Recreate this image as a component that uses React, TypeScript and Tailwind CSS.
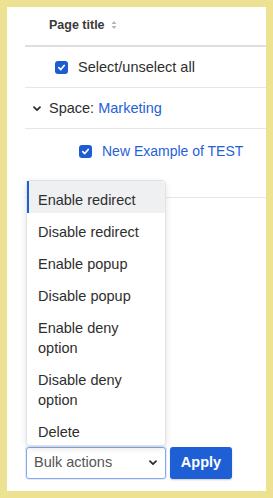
import React from "react";

const menuItems = [
  "Enable redirect",
  "Disable redirect",
  "Enable popup",
  "Disable popup",
  "Enable deny option",
  "Disable deny option",
  "Delete",
];

function Checkbox() {
  return (
    <span className="flex h-[13px] w-[13px] shrink-0 items-center justify-center rounded-[3px] bg-[#1d5cd3]">
      <svg width="9" height="9" viewBox="0 0 10 10" fill="none">
        <path d="M2 5.2 L4.2 7.3 L8 2.8" stroke="white" strokeWidth="1.9" strokeLinecap="round" strokeLinejoin="round" />
      </svg>
    </span>
  );
}

function SortIcon() {
  return (
    <svg width="6" height="10" viewBox="0 0 6 10" className="ml-[6px]">
      <path d="M3 1 L5.5 4 H0.5 Z" fill="#b5b5b5" />
      <path d="M3 9 L5.5 6 H0.5 Z" fill="#b5b5b5" />
    </svg>
  );
}

function Chevron({ className }: { className?: string }) {
  return (
    <svg width="8" height="6" viewBox="0 0 8 6" fill="none" className={className}>
      <path d="M1 1.2 L4 4.2 L7 1.2" stroke="#2b2b2b" strokeWidth="1.7" strokeLinecap="round" strokeLinejoin="round" />
    </svg>
  );
}

export default function App() {
  return (
    <div className="h-[498px] w-[273px] bg-[#ece292] p-[7px] font-['Liberation_Sans',Arial,sans-serif] text-[14.5px] text-[#2e2e2e]">
      <div className="flex h-full w-full flex-col bg-white">
        {/* tabla */}
        <div className="ml-[18px]">
          <div className="flex h-[40px] items-center border-b-2 border-[#dedede] pb-[2px] pl-[24px]">
            <span className="text-[12.5px] font-bold text-[#3a3a3a]">Page title</span>
            <SortIcon />
          </div>
          <div className="flex h-[41px] items-center gap-[10px] border-b border-[#e6e6e6] pl-[30px] pt-[1px]">
            <Checkbox />
            <span>Select/unselect all</span>
          </div>
          <div className="flex h-[41px] items-center gap-[8px] border-b border-[#e6e6e6] pl-[8px] pt-[1px]">
            <Chevron />
            <span>
              Space: <span className="text-[#1f62d8]">Marketing</span>
            </span>
          </div>
          <div className="h-[69px] border-b border-[#e6e6e6]">
            <div className="flex h-[44px] items-center gap-[10px] pl-[54px]">
              <Checkbox />
              <span className="text-[14px] text-[#1f62d8]">New Example of TEST</span>
            </div>
          </div>
        </div>

        <div className="flex-1" />

        {/* acciones masivas */}
        <div className="mb-[12px] ml-[19px] flex items-center gap-[4px]">
          <div className="relative">
            <div className="absolute bottom-full left-0 mb-[1px] w-[140px] rounded-[4px] border border-[#e3e3e3] bg-white shadow-[0_2px_6px_rgba(0,0,0,0.12)]">
              {menuItems.map((item, i) => (
                <div
                  key={item}
                  className={
                    i === 0
                      ? "border-l-2 border-[#1f5fd6] bg-[#eff0f2] pb-[3px] pl-[9px] pr-[15px] pt-[9px] leading-[20px]"
                      : "border-l-2 border-transparent pb-[3px] pl-[9px] pr-[15px] pt-[9px] leading-[20px]"
                  }
                >
                  {item}
                </div>
              ))}
            </div>
            <div className="flex h-[32px] w-[140px] items-center justify-between rounded-[3px] border border-[#86aaea] pl-[7px] pr-[8px] text-[#555] shadow-[0_0_0_1px_rgba(134,170,234,0.25)]">
              <span>Bulk actions</span>
              <Chevron />
            </div>
          </div>
          <button className="h-[32px] w-[62px] rounded-[3px] bg-[#1e5fd5] text-[14.5px] font-bold text-white shadow-[0_1px_2px_rgba(0,0,0,0.2)]">
            Apply
          </button>
        </div>
      </div>
    </div>
  );
}
